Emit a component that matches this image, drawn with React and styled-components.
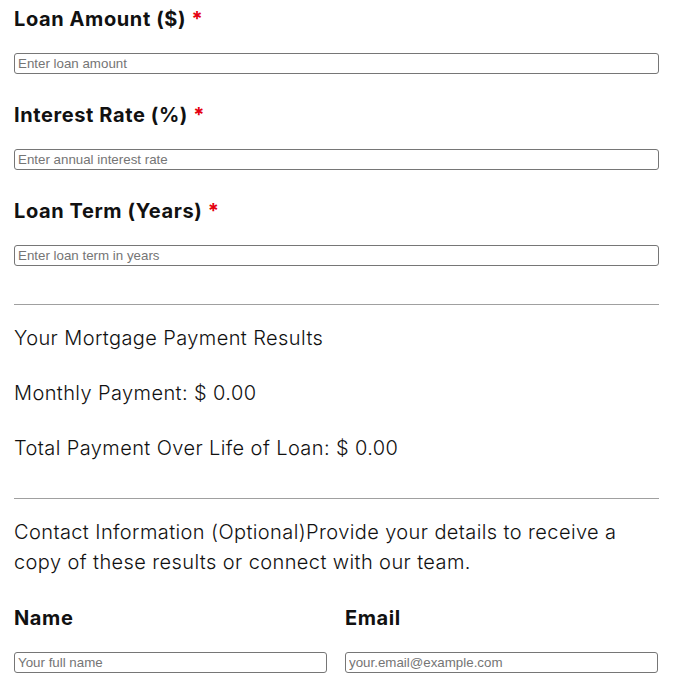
import React from 'react'
import styled, { createGlobalStyle } from 'styled-components'

const GlobalStyle = createGlobalStyle`
  body {
    margin: 0;
    background: #fff;
    color: #111;
    font-family: Inter, "Noto Sans", sans-serif;
  }
`

const fields = [
  { id: 'amount', label: 'Loan Amount ($)', placeholder: 'Enter loan amount' },
  { id: 'rate', label: 'Interest Rate (%)', placeholder: 'Enter annual interest rate' },
  { id: 'term', label: 'Loan Term (Years)', placeholder: 'Enter loan term in years' },
]

export default () => (
  <Page>
    <GlobalStyle />
    {fields.map(({ id, label, placeholder }) => (
      <Field key={id}>
        <Label htmlFor={id}>
          {label} <Required>*</Required>
        </Label>
        <Input id={id} type="text" placeholder={placeholder} />
      </Field>
    ))}
    <Divider />
    <Results>
      <ResultLine>Your Mortgage Payment Results</ResultLine>
      <ResultLine>Monthly Payment: $ 0.00</ResultLine>
      <ResultLine>Total Payment Over Life of Loan: $ 0.00</ResultLine>
    </Results>
    <Divider $gap={18} />
    <Intro>
      Contact Information (Optional)Provide your details to receive a copy of
      these results or connect with our team.
    </Intro>
    <Columns>
      <Field>
        <Label htmlFor="name">Name</Label>
        <Input id="name" type="text" placeholder="Your full name" />
      </Field>
      <Field>
        <Label htmlFor="email">Email</Label>
        <Input id="email" type="email" placeholder="your.email@example.com" />
      </Field>
    </Columns>
  </Page>
)

const Page = styled.main`
  padding: 7px 29px 20px 14px;
`

const Field = styled.div`
  display: flex;
  flex-direction: column;
  margin-bottom: 29px;
`

const Label = styled.label`
  font-size: 20px;
  line-height: 24px;
  font-weight: 700;
  letter-spacing: 0.6px;
  margin-bottom: 22px;
`

const Required = styled.span`
  color: #e5000f;
`

const Input = styled.input`
  box-sizing: border-box;
  height: 21px;
  width: 100%;
  margin: 0;
  padding: 1px 3px;
  border: 1px solid #767676;
  border-radius: 3px;
  font-family: "Liberation Sans", Arial, sans-serif;
  font-size: 13.33px;
  color: #111;

  &::placeholder {
    color: #757575;
  }
`

const Divider = styled.hr`
  border: 0;
  border-top: 1px solid #a0a0a0;
  margin: 38px 0 ${({ $gap }) => $gap || 21}px;
`

const Results = styled.section`
  display: flex;
  flex-direction: column;
  gap: 31px;
`

const ResultLine = styled.p`
  margin: 0;
  font-size: 20px;
  line-height: 24px;
  font-weight: 300;
  letter-spacing: 0.4px;
`

const Intro = styled.p`
  margin: 0 0 29px;
  font-size: 20px;
  line-height: 30px;
  font-weight: 300;
  letter-spacing: 0.4px;
`

const Columns = styled.div`
  display: grid;
  grid-template-columns: 1fr 1fr;
  column-gap: 18px;
  margin-right: 1px;
`
